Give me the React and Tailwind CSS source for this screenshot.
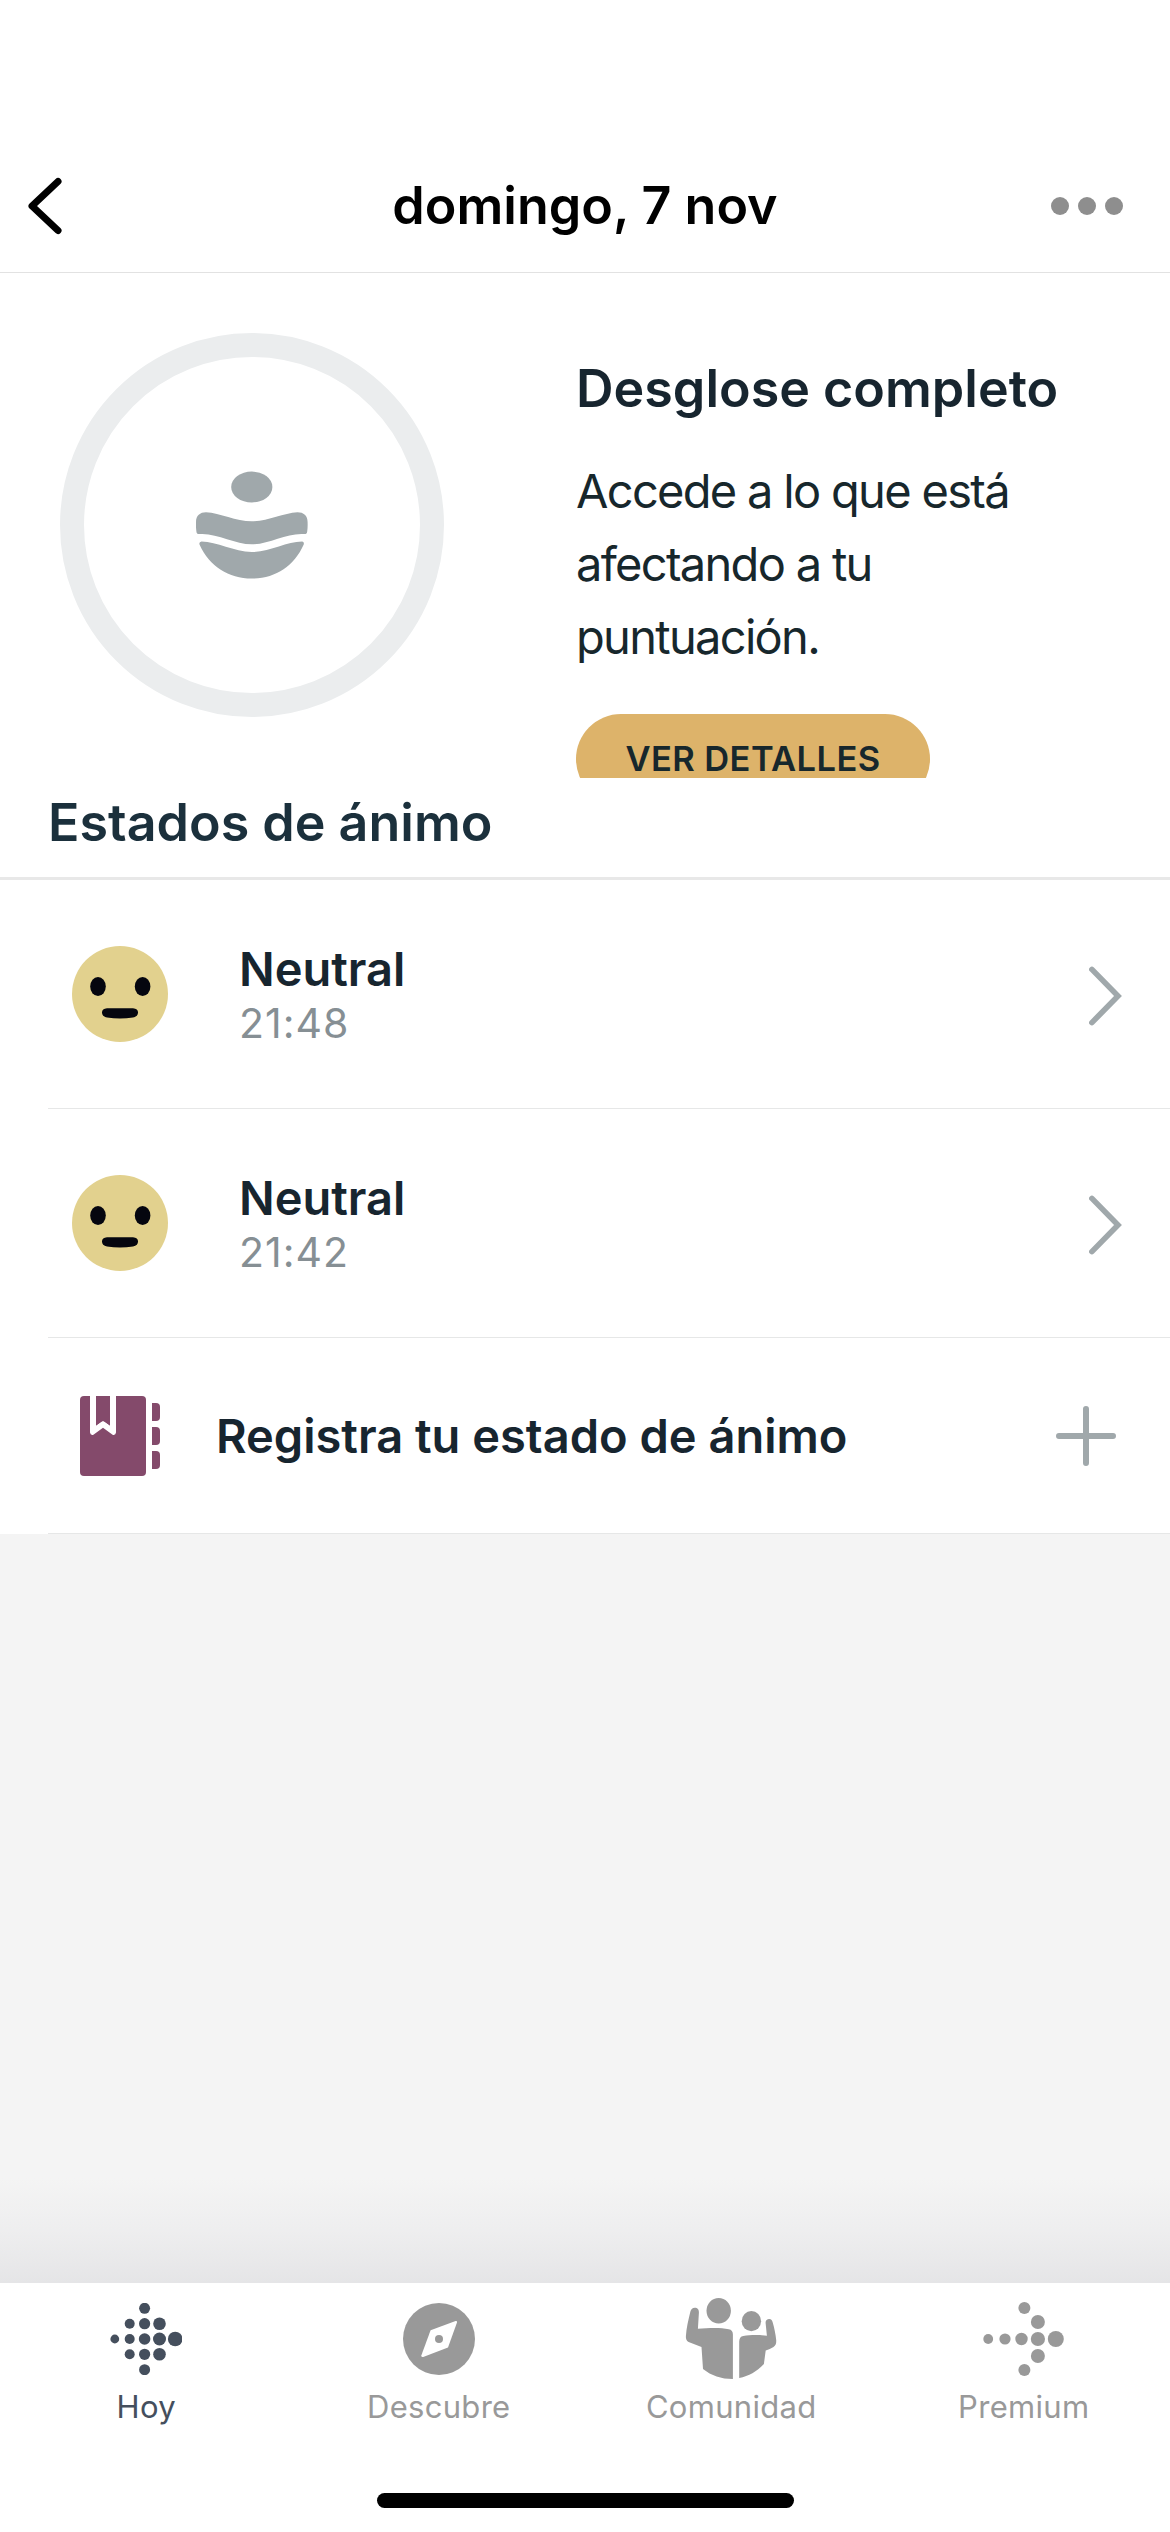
import React from 'react';

const moods = [
    { id: 1, name: 'Neutral', time: '21:48' },
    { id: 2, name: 'Neutral', time: '21:42' },
];

const hoyDots = [
    [4.8, 36, 4.4], [19.7, 20.7, 5], [19.7, 36, 5], [19.7, 51.3, 5],
    [34.6, 5.3, 5.5], [34.6, 20.7, 5.6], [34.6, 36, 5.8], [34.6, 51.3, 5.6], [34.6, 66.7, 5.5],
    [49.5, 20.7, 6.3], [49.5, 36, 6.5], [49.5, 51.3, 6.3], [65.2, 36, 7.3],
];

const premiumDots = [
    [5.2, 39, 4.9], [22, 39, 5.6], [38.5, 39, 6.2], [54.9, 39, 7.1], [72.8, 39, 8],
    [54.9, 22, 7], [54.9, 56, 7], [41.4, 8, 6], [41.4, 70, 6],
];

function HoyIcon() {
    return (
        <svg className="w-[72px] h-[72px]" viewBox="0 0 72 72" fill="currentColor">
            {hoyDots.map(([x, y, r]) => <circle key={`${x}-${y}`} cx={x} cy={y} r={r} />)}
        </svg>
    );
}

function DescubreIcon() {
    return (
        <svg className="w-[72px] h-[72px]" viewBox="0 0 72 72">
            <circle cx="36" cy="36" r="36" fill="currentColor" />
            <path d="M27.6 27.2 L52.6 18.1 Q54.6 17.6 53.9 19.8 L45 44.6 L20.2 53.9 Q17.8 54.4 18.4 52.2 Z" fill="white" />
            <circle cx="36" cy="36" r="4" fill="currentColor" />
        </svg>
    );
}

function ComunidadIcon() {
    return (
        <svg className="w-[94px] h-[88px]" viewBox="0 0 94 88" fill="currentColor">
            <ellipse cx="34.7" cy="15.7" rx="12.2" ry="12.8" />
            <ellipse cx="67.4" cy="26.2" rx="9.7" ry="10.1" />
            <path d="M10.8 12.7 C13.4 12.7 15.2 14.6 14.9 17.7 L13.9 33.8 C19 33.1 25 33 30.6 33 C36 33 40.5 33.5 44.8 34.3 Q48.9 35 48.9 39.5 V84 C37 84 27.5 80.7 19 74 L17.5 52 L4.6 47 C2.4 46 1.7 43.5 1.9 41 C2.4 33 4.4 25 6.4 16.6 C7 14 8.6 12.7 10.8 12.7 Z" />
            <path d="M55.2 83 V46.7 Q55.2 41.8 59.3 41.1 C66 39.8 75 39.8 82.9 40.7 L81.6 28 C81.4 25.5 83 24 85.3 24 C87.3 24 88.3 25.4 88.8 27.7 C90.3 33 91.6 39 92.2 45 C92.4 48.4 92 50.4 89.5 52 C87 53.6 84.6 54.4 81.7 55.4 L79.9 69 C72.5 76.7 65 81 55.2 83 Z" />
        </svg>
    );
}

function PremiumIcon() {
    return (
        <svg className="w-[81px] h-[78px]" viewBox="0 0 81 78" fill="currentColor">
            {premiumDots.map(([x, y, r]) => <circle key={`${x}-${y}`} cx={x} cy={y} r={r} />)}
        </svg>
    );
}

const tabs = [
    { label: 'Hoy', Icon: HoyIcon, active: true },
    { label: 'Descubre', Icon: DescubreIcon },
    { label: 'Comunidad', Icon: ComunidadIcon },
    { label: 'Premium', Icon: PremiumIcon },
];

function Header() {
    return (
        <header className="h-[273px] pt-[140px] pl-[28px] pr-[47px] grid grid-cols-[1fr_auto_1fr] items-center border-b border-[#e2e2e2]">
            <svg className="w-[34px] h-[58px]" viewBox="0 0 34 58" fill="none" stroke="black" strokeWidth="7" strokeLinecap="round" strokeLinejoin="round">
                <path d="M30 4.5 L4 29 L30 53.5" />
            </svg>
            <h1 className="pl-[19px] text-[52px] leading-[66px] font-semibold text-black">domingo, 7 nov</h1>
            <div className="flex justify-end gap-[9px]">
                <span className="size-[18px] rounded-full bg-[#8e8e8e]" />
                <span className="size-[18px] rounded-full bg-[#8e8e8e]" />
                <span className="size-[18px] rounded-full bg-[#8e8e8e]" />
            </div>
        </header>
    );
}

function ScoreCard() {
    return (
        <section className="h-[505px] overflow-hidden flex pl-[60px]">
            <div className="mt-[60px] size-[384px] shrink-0 rounded-full border-[24px] border-[#ebedee] flex items-center justify-center">
                {/* stacked stones */}
                <svg className="w-[112px] h-[108px]" viewBox="0 0 112 108" fill="#a0a8ab">
                    <ellipse cx="55.8" cy="16" rx="20.6" ry="15.4" />
                    <path d="M0 51 C0 44.5 4 41.2 10 41.2 C24 42 40 50.3 55.8 50.3 C71.6 50.3 87 42 101.5 41.2 C107.6 41.2 111.6 44.5 111.6 51 C111.7 54.5 111.7 57 111.2 60.5 C111 62.5 110 63.2 108 63 C91 61.7 73 73.3 55.8 73.3 C38.6 73.3 20.6 61.7 3.6 63 C1.6 63.2 .6 62.5 .4 60.5 C-.1 57 -.1 54.5 0 51 Z" />
                    <path d="M5.5 70.6 C21 70.6 38 81 55.8 81 C73.6 81 90.6 70.6 106.1 70.6 Q108.6 71 107.6 73.8 C98 95.5 79 107.6 55.8 107.6 C32.6 107.6 13.6 95.5 3.6 73.8 Q2.6 71 5.5 70.6 Z" />
                </svg>
            </div>
            <div className="ml-[132px] pt-[86px] flex flex-col items-start">
                <h2 className="text-[52px] leading-[60px] font-semibold text-[#17252f]">Desglose completo</h2>
                <p className="mt-[35px] w-[460px] text-[47px] leading-[73px] tracking-[-0.036em] text-[#17272c]">Accede a lo que está afectando a tu puntuación.</p>
                <button className="mt-[41px] w-[354px] h-[90px] shrink-0 rounded-full bg-[#ddb36a] text-[34.5px] leading-none tracking-[0.012em] font-semibold text-[#17272c]">VER DETALLES</button>
            </div>
        </section>
    );
}

function MoodRow({ mood }) {
    return (
        <li className="ml-12 h-[229px] pl-6 pr-12 flex items-center border-b border-[#e6e7e7]">
            <svg className="size-24" viewBox="0 0 96 96">
                <circle cx="48" cy="48" r="48" fill="#e2d18e" />
                <ellipse cx="26" cy="40.5" rx="7.8" ry="9.6" fill="#05060f" />
                <ellipse cx="70.6" cy="40.5" rx="7.8" ry="9.6" fill="#05060f" />
                <path d="M35 62.3 H61 Q66 62.6 66 66.5 Q66 70.3 61 71.6 Q48 73.6 35 71.6 Q30 70.3 30 66.5 Q30 62.6 35 62.3 Z" fill="#05060f" />
            </svg>
            <div className="ml-[71px] pt-1 flex-1">
                <p className="text-[47px] leading-[54px] font-semibold text-[#17252f]">{mood.name}</p>
                <p className="text-[41px] leading-[54px] tracking-[0.025em] text-[#868f94]">{mood.time}</p>
            </div>
            <svg className="mt-[3px] w-[33px] h-[60px]" viewBox="0 0 33 60" fill="none" stroke="#a0a8ab" strokeWidth="5.6" strokeLinecap="round" strokeLinejoin="miter">
                <path d="M2.9 3.4 L29 30 L2.9 56.6" />
            </svg>
        </li>
    );
}

function LogMoodRow() {
    return (
        <li className="ml-12 h-[196px] pl-8 pr-[54px] flex items-center border-b border-[#e6e7e7]">
            <svg className="w-20 h-20" viewBox="0 0 80 80" fill="#844a6b">
                <rect width="66" height="80" rx="4" />
                <path d="M10 0 H16 V29.5 L21.3 25.8 Q23 24.3 24.7 25.8 L30 29.5 V0 H36 V36.5 Q35.5 39.6 32.6 38.7 L23 31.8 L13.4 38.7 Q10.5 39.6 10 36.5 Z" fill="white" />
                <path d="M16 -1 H30 V29.5 L24.7 25.8 Q23 24.3 21.3 25.8 L16 29.5 Z" />
                <path d="M72 7 H76 Q80 7 80 11 V21 Q80 25 76 25 H72 Z" />
                <path d="M72 31 H76 Q80 31 80 35 V45 Q80 49 76 49 H72 Z" />
                <path d="M72 55 H76 Q80 55 80 59 V69 Q80 73 76 73 H72 Z" />
            </svg>
            <p className="ml-[56px] flex-1 text-[47px] leading-[54px] font-semibold text-[#17252f]">Registra tu estado de ánimo</p>
            <svg className="size-[60px]" viewBox="0 0 60 60" fill="none" stroke="#a0a8ab" strokeWidth="6" strokeLinecap="round">
                <path d="M3 30 H57 M30 3 V57" />
            </svg>
        </li>
    );
}

function TabBar() {
    return (
        <nav className="h-[249px] bg-white flex flex-col items-center">
            <div className="w-full h-[210px] grid grid-cols-4">
                {tabs.map(({ label, Icon, active }) => (
                    <div key={label} className={`flex flex-col items-center ${active ? 'text-[#454f5d]' : 'text-[#999999]'}`}>
                        <div className="h-[112px] flex items-center justify-center"><Icon /></div>
                        <span className="-mt-[8px] text-[31px] leading-[40px] tracking-[0.01em]">{label}</span>
                    </div>
                ))}
            </div>
            <div className="w-[417px] h-[15px] rounded-full bg-black" />
        </nav>
    );
}

export default function App() {
    return (
        <div className="w-[1170px] h-[2532px] flex flex-col bg-[#f4f4f4] font-['Inter','Liberation_Sans',sans-serif]">
            <main className="bg-white">
                <Header />
                <ScoreCard />
                <h2 className="pl-[48px] pt-[12px] pb-[21px] text-[52px] leading-[66px] font-semibold text-[#1b303c] border-b-[3px] border-[#e8e8e8]">Estados de ánimo</h2>
                <ul>
                    {moods.map(mood => <MoodRow key={mood.id} mood={mood} />)}
                    <LogMoodRow />
                </ul>
            </main>
            <div className="flex-1 flex flex-col justify-end">
                <div className="h-[105px] bg-linear-to-b from-[#f4f4f4] via-[#eeeeef] to-[#e5e5e7]" />
            </div>
            <TabBar />
        </div>
    );
}
